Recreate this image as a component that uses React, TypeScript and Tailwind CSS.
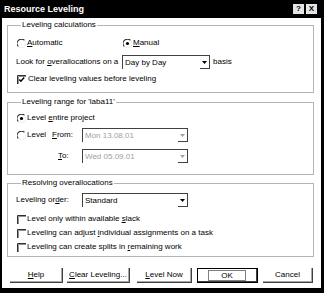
import React from 'react';

const Radio = ({ checked }: { checked?: boolean }) => (
  <svg width="9" height="9" viewBox="0 0 9 9" className="shrink-0">
    <path d="M1.4 7.6 A4 4 0 0 1 7.6 1.4" fill="none" stroke="#303030" strokeWidth="1.1" />
    <path d="M7.6 1.4 A4 4 0 0 1 1.4 7.6" fill="none" stroke="#ececec" strokeWidth="1" />
    {checked && <circle cx="4.5" cy="4.5" r="1.6" fill="#000" />}
  </svg>
);

const Check = ({ checked }: { checked?: boolean }) => (
  <svg width="9" height="9" viewBox="0 0 9 9" className="shrink-0">
    <path d="M0.5 9 V0.5 H9" fill="none" stroke="#303030" strokeWidth="1" />
    <path d="M1.5 9 V1.5 H9" fill="none" stroke="#909090" strokeWidth="1" />
    {checked && <path d="M2.3 4.4 L3.9 6.2 L7.2 2.6" fill="none" stroke="#000" strokeWidth="1.5" />}
  </svg>
);

const Select = ({ value, width, disabled }: { value: string; width: string; disabled?: boolean }) => (
  <div className={`${width} h-[14px] flex border-t border-l border-[#404040] bg-white`}>
    <div className={`flex-1 flex items-center pl-[2px] ${disabled ? 'text-[#a0a0a0]' : ''}`}>{value}</div>
    <div className="w-[10px] flex items-center justify-center border-r border-b border-[#404040]">
      <svg width="5" height="3" viewBox="0 0 5 3">
        <path d="M0 0 H5 L2.5 3 Z" fill={disabled ? '#a0a0a0' : '#000'} />
      </svg>
    </div>
  </div>
);

const Group = ({ title, className, children }: { title: string; className: string; children: React.ReactNode }) => (
  <fieldset className={`border border-[#b4b4b4] pl-[9px] ${className}`}>
    <legend className="ml-[4px] px-[1px] leading-[10px]">{title}</legend>
    {children}
  </fieldset>
);

const Btn = ({ children, width, isDefault }: { children: React.ReactNode; width: string; isDefault?: boolean }) =>
  isDefault ? (
    <div className={`${width} h-[15px] border border-black flex`}>
      <div className="flex-1 flex items-center justify-center border-r border-b border-[#404040]">
        <div className="border border-[#808080] px-[12px] leading-[9px]">{children}</div>
      </div>
    </div>
  ) : (
    <div className={`${width} h-[15px] flex items-center justify-center border-r border-b border-[#404040] shadow-[inset_-1px_-1px_0_#a8a8a8]`}>
      {children}
    </div>
  );

export default function App() {
  return (
    <div className="w-[324px] h-[293px] bg-black pl-[2px] pr-[3px] pb-[5px] flex flex-col font-['Liberation_Sans',Arial,sans-serif] text-[8px] text-black leading-[10px]">
      <div className="h-[18px] flex items-center justify-between pl-[2px]">
        <span className="text-white font-bold text-[9px]">Resource Leveling</span>
        <div className="flex gap-[2px] mr-[4px]">
          <div className="w-[11px] h-[10px] bg-[#e4e4e4] font-bold text-[8px] leading-none flex items-center justify-center">?</div>
          <div className="w-[11px] h-[10px] bg-[#e4e4e4] font-bold text-[8px] leading-none flex items-center justify-center">X</div>
        </div>
      </div>

      <div className="flex-1 bg-white flex flex-col pl-[5px] pr-[7px]">
        <Group title="Leveling calculations" className="mt-[2px] pb-[6px]">
          <div className="h-[14px] flex items-center mt-[6px]">
            <div className="w-[106px] flex items-center gap-[1px]">
              <Radio />
              <span><u>A</u>utomatic</span>
            </div>
            <div className="flex items-center gap-[1px]">
              <Radio checked />
              <span><u>M</u>anual</span>
            </div>
          </div>
          <div className="h-[14px] flex items-center mt-[5px] ml-[-1px]">
            <span className="w-[106px]">Look for <u>o</u>verallocations on a</span>
            <Select value="Day by Day" width="w-[88px]" />
            <span className="ml-[3px]">basis</span>
          </div>
          <div className="h-[14px] flex items-center gap-[2px] mt-[3px]">
            <Check checked />
            <span>Clear leveling values before leveling</span>
          </div>
        </Group>

        <Group title="Leveling range for 'laba11'" className="mt-[4px] pb-[11px]">
          <div className="h-[14px] flex items-center gap-[1px] mt-[4px]">
            <Radio checked />
            <span>Level <u>e</u>ntire project</span>
          </div>
          <div className="h-[14px] flex items-center mt-[3px]">
            <div className="w-[35px] flex items-center gap-[1px]">
              <Radio />
              <span>Level</span>
            </div>
            <span className="w-[30px]"><u>F</u>rom:</span>
            <Select value="Mon 13.08.01" width="w-[106px]" disabled />
          </div>
          <div className="h-[14px] flex items-center mt-[7px]">
            <span className="w-[24px] ml-[41px]"><u>T</u>o:</span>
            <Select value="Wed 05.09.01" width="w-[106px]" disabled />
          </div>
        </Group>

        <Group title="Resolving overallocations" className="mt-[3px] pb-[2px]">
          <div className="h-[14px] flex items-center mt-[5px] ml-[-1px]">
            <span className="w-[66px]">Leveling or<u>d</u>er:</span>
            <Select value="Standard" width="w-[106px]" />
          </div>
          <div className="h-[14px] flex items-center gap-[1px] mt-[5px]">
            <Check />
            <span>Level only within available <u>s</u>lack</span>
          </div>
          <div className="h-[14px] flex items-center gap-[1px]">
            <Check />
            <span>Leveling can adjust <u>i</u>ndividual assignments on a task</span>
          </div>
          <div className="h-[14px] flex items-center gap-[1px]">
            <Check />
            <span>Leveling can create splits in <u>r</u>emaining work</span>
          </div>
        </Group>

        <div className="flex mt-[11px] ml-[3px]">
          <Btn width="w-[53px]"><u>H</u>elp</Btn>
          <div className="ml-[4px]"><Btn width="w-[63px]"><u>C</u>lear Leveling...</Btn></div>
          <div className="ml-[7px]"><Btn width="w-[55px]"><u>L</u>evel Now</Btn></div>
          <div className="ml-[5px]"><Btn width="w-[61px]" isDefault>OK</Btn></div>
          <div className="ml-[5px]"><Btn width="w-[50px]">Cancel</Btn></div>
        </div>
      </div>
    </div>
  );
}
